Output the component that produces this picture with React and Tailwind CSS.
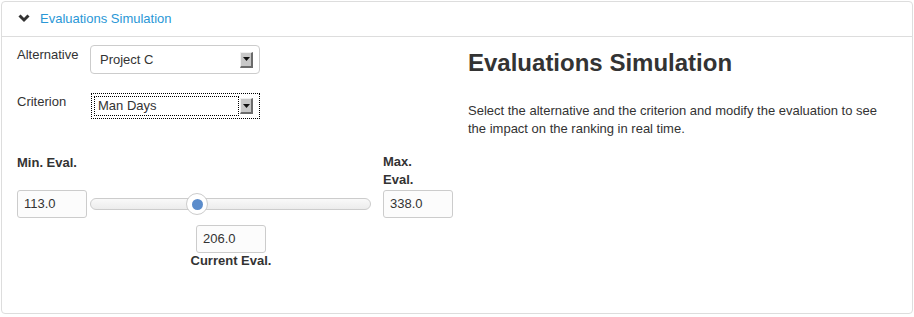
import React from "react";

function SelectArrow() {
  return (
    <div className="flex h-[16px] w-[13px] items-center justify-center border-t border-l border-t-[#f0f0f0] border-l-[#f0f0f0] border-r-2 border-b-2 border-r-[#6b6b6b] border-b-[#6b6b6b] bg-[#c8c8c8]">
      <svg width="7" height="4" viewBox="0 0 7 4">
        <path d="M0 0 L7 0 L3.5 4 Z" fill="#111" />
      </svg>
    </div>
  );
}

export default function App() {
  return (
    <div className="bg-white font-['Liberation_Sans',Arial,sans-serif] text-[13px] text-[#333]">
      <div className="m-px h-[313px] w-[912px] rounded border border-[#ddd] bg-white">
        {/* header */}
        <div className="flex h-[35px] items-center gap-[10px] border-b border-[#ddd] pl-[16px]">
          <svg width="12" height="9" viewBox="0 0 12 9" className="mt-[-2px]">
            <path d="M1.5 1.5 L6 6 L10.5 1.5" fill="none" stroke="#333" strokeWidth="3" />
          </svg>
          <span className="text-[#2a97d6]">Evaluations Simulation</span>
        </div>
        {/* body */}
        <div className="flex gap-[15px] pl-[15px] pt-2">
          {/* left */}
          <div className="w-[436px]">
            <div className="flex">
              <div className="w-[73px] pt-[1px] leading-[18px]">Alternative</div>
              <div className="flex h-[29px] w-[170px] items-center justify-between rounded border border-[#ccc] pl-[9px] pr-[6px]">
                <span>Project C</span>
                <SelectArrow />
              </div>
            </div>
            <div className="mt-[19px] flex">
              <div className="w-[74px] leading-[18px]">Criterion</div>
              <div className="flex h-[26px] w-[169px] items-center border border-dotted border-black p-[2px]">
                <div className="flex h-full flex-1 items-center border border-dotted border-black pl-[3px]">
                  Man Days
                </div>
                <div className="pl-[1px] pr-[4px]">
                  <SelectArrow />
                </div>
              </div>
            </div>

            {/* slider area */}
            <div className="mt-[34px] flex items-end">
              <div className="w-[70px]">
                <div className="mb-[18px] font-bold leading-[18px]">Min. Eval.</div>
                <div className="flex h-[28px] items-center rounded-[3px] border border-[#ccc] bg-[#fcfcfc] pl-[6px]">
                  113.0
                </div>
              </div>
              <div className="ml-[3px] mr-[12px] flex h-[28px] w-[281px] items-center">
                <div className="relative h-[12px] w-full rounded-full border border-[#ccc] bg-gradient-to-b from-[#f9f9f9] to-[#ececec]">
                  <div className="absolute left-[95px] top-[-6px] flex h-[22px] w-[22px] items-center justify-center rounded-full border border-[#ccc] bg-white">
                    <div className="h-[11px] w-[11px] rounded-full bg-[#5b8ccb]" />
                  </div>
                </div>
              </div>
              <div className="w-[70px]">
                <div className="mb-[1px] font-bold leading-[18px]">
                  Max.
                  <br />
                  Eval.
                </div>
                <div className="flex h-[28px] items-center rounded-[3px] border border-[#ccc] bg-[#fcfcfc] pl-[6px]">
                  338.0
                </div>
              </div>
            </div>
            <div className="ml-[179px] mt-[7px] w-[70px]">
              <div className="flex h-[28px] items-center rounded-[3px] border border-[#ccc] bg-[#fcfcfc] pl-[6px]">
                206.0
              </div>
            </div>
            <div className="ml-[102px] mt-0 w-[224px] text-center font-bold leading-[16px]">Current Eval.</div>
          </div>
          {/* right */}
          <div className="flex-1 pr-4">
            <h2 className="mt-[3px] text-[24px] font-bold leading-[30px]">Evaluations Simulation</h2>
            <p className="mt-[24px] leading-[18px]">
              Select the alternative and the criterion and modify the evaluation to see the impact on the ranking in real time.
            </p>
          </div>
        </div>
      </div>
    </div>
  );
}
